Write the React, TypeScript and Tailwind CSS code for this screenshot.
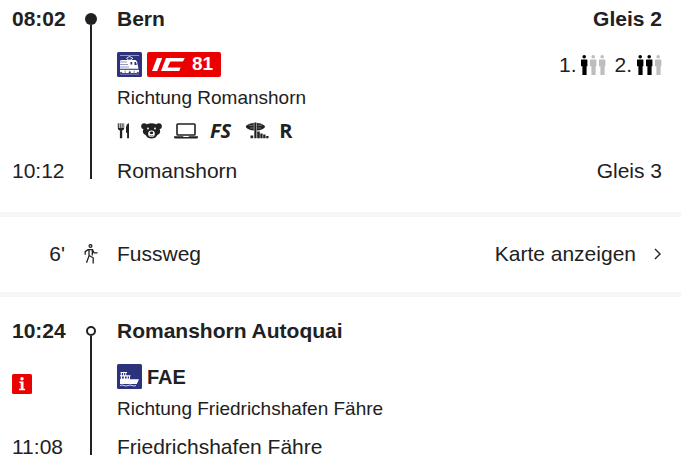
interface StopProps {
  name: string;
  platform?: string;
  bold?: boolean;
}

interface LineProps {
  filled?: boolean;
}

function Stop({ name, platform, bold }: StopProps) {
  return (
    <div className={`flex justify-between leading-6 ${bold ? 'font-bold' : ''}`}>
      <span>{name}</span>
      {platform && <span>{platform}</span>}
    </div>
  );
}

function Line({ filled }: LineProps) {
  return (
    <div className="flex flex-col items-center pt-1.5 pb-1">
      {filled ? (
        <span className="size-3 rounded-full bg-[#212121]" />
      ) : (
        <span className="mt-px size-2.5 rounded-full border-2 border-[#212121]" />
      )}
      <span className="w-0.5 grow bg-[#212121]" />
    </div>
  );
}

function Person({ active }: { active: boolean }) {
  return (
    <svg viewBox="0 0 7 20" className={`h-5 w-[7px] ${active ? 'text-black' : 'text-[#bdbdbd]'}`} fill="currentColor" aria-hidden="true">
      <circle cx="3.2" cy="1.8" r="1.8" />
      <path d="M.4 4.6h5.6q.4 0 .4.4v6.2h-.8V20H1.4v-8.8H0V5q0-.4.4-.4z" />
    </svg>
  );
}

function Occupancy({ label, level }: { label: string; level: number }) {
  return (
    <span className="flex items-center gap-[5px]">
      {label}
      <span className="flex gap-0.5">
        {[1, 2, 3].map((n) => (
          <Person key={n} active={n <= level} />
        ))}
      </span>
    </span>
  );
}

function TrainIcon() {
  return (
    <svg viewBox="0 0 25 25" className="size-[25px]" role="img" aria-label="Zug">
      <rect width="25" height="25" rx="1.5" fill="#2d327d" />
      <path d="M3 3.5h19" stroke="#fff" strokeWidth=".5" />
      <path d="M9.5 6.3l3-1.8 3.3 1.8-2 1.7h-2.5z" stroke="#fff" strokeWidth=".9" fill="none" />
      <path d="M5 8h13.5l1.5 1.5 1.500 7.200H3V8.500z" fill="#fff" />
      <path d="M3 10h7M3 12.500h8M3 15h9" stroke="#2d327d" strokeWidth=".5" />
      <path d="M13.500 10h1.700v2.500h-1.700zM17.500 10h1.500l.8 3h-2.300z" fill="#2d327d" />
      <path d="M3 17.800h19v3.200H3z" fill="#fff" />
      <path d="M4 19.500l1.500 1.500H3zM12.800 18.500l1.200 2.500h-2.500zM21 19.500l1 1.500h-2.500z" fill="#2d327d" />
      <path d="M8.200 18.600v2.400M17.200 18.600v2.400" stroke="#2d327d" strokeWidth=".6" />
      <path d="M3 22.200h19" stroke="#fff" strokeWidth=".4" />
    </svg>
  );
}

function BoatIcon() {
  return (
    <svg viewBox="0 0 25 25" className="size-[25px]" role="img" aria-label="Schiff">
      <rect width="25" height="25" rx="1.5" fill="#2d327d" />
      <path d="M3.500 8h6.500v1h-.8v2.300h4.300v1H13v3h9l-2.200 4.700H3V15h.8v-2.700H3v-1h.8V9h-.3zM4.800 9v2.300h1.300V9zm2.300 0v2.300h1.200V9zM5 12.500v2h1.800v-2zm3 0v2h1.600v-2zm2.700 0v2h1.300v-2z" fill="#fff" fillRule="evenodd" />
      <path d="M3 21.500q2-1 4 0t4 0 4 0 4 0" stroke="#fff" strokeWidth=".8" fill="none" />
    </svg>
  );
}

function IcLogo() {
  return (
    <svg viewBox="0 0 33 14" className="h-3.5 w-[33px]" fill="#fff" role="img" aria-label="IC">
      <path d="M5 0h5.200L5.200 13H0zM14 0h18.700L31 3.600H18.300l-2.700 6h13L27.200 13H9z" />
    </svg>
  );
}

function RestaurantIcon() {
  return (
    <svg viewBox="0 0 12 16" className="h-4 w-3" fill="currentColor" role="img" aria-label="Restaurant">
      <path d="M.8.2h1V5h.9V.2h1V5h.9V.2h1V5h.9V.2h.7v5q0 1.800-2 2.400v7.600H2.900V7.600q-2.100-.6-2.100-2.400zM12 .2v15h-1.900V9.800H9V4.500Q9.300.8 12 .2z" />
    </svg>
  );
}

function BearIcon() {
  return (
    <svg viewBox="0 0 21 16" className="h-4 w-[21px]" role="img" aria-label="Familienwagen">
      <g fill="currentColor">
        <circle cx="3.2" cy="3.2" r="3" />
        <circle cx="17.8" cy="3.2" r="3" />
        <path d="M10.500.3q4.800 0 6.800 3.200l1.800 4q.5 3-2.700 4.500-1.700 3.500-5.900 3.500T4.600 12Q1.400 10.500 1.900 7.500l1.800-4Q5.700.3 10.500.3z" />
      </g>
      <g fill="#fff">
        <circle cx="7" cy="5.5" r=".9" />
        <circle cx="14" cy="5.5" r=".9" />
        <circle cx="10.5" cy="10.7" r="3.3" />
      </g>
      <ellipse cx="10.5" cy="9.8" rx="1.8" ry="1.4" fill="currentColor" />
      <path d="M8.700 12.500q1.800 1.200 3.600 0" stroke="currentColor" strokeWidth=".7" fill="none" />
    </svg>
  );
}

function LaptopIcon() {
  return (
    <svg viewBox="0 0 24 16" className="h-4 w-6" role="img" aria-label="Ruhezone">
      <rect x="3" y="1" width="18" height="11" rx=".8" fill="none" stroke="currentColor" strokeWidth="1.6" />
      <path d="M0 13.200h9l.6.700h4.800l.6-.7h9v.9q0 1.500-1.500 1.500h-21Q0 15.600 0 14.100z" fill="currentColor" />
    </svg>
  );
}

function WirelessIcon() {
  return (
    <svg viewBox="0 0 24 17" className="h-[17px] w-6" role="img" aria-label="Gratis-Internet">
      <g fill="currentColor">
        <path d="M8.800 1Q5 1.200 2.200 3 .8 3.800.8 4.700t1.400 1.700Q5 8.300 8.800 8.500zM12 1q3.800.2 6.600 2 1.400.8 1.400 1.700t-1.400 1.700q-2.800 1.900-6.600 2.100z" />
        <path d="M9.300.5h2.200v15.700H9.300zM5.500 13.500h2.700v2.700H5.500zM12.200 9.500h2.600v6.700h-2.600zM15.300 11.500h2.300v4.700h-2.300zM18.200 12.500h2.300v3.700h-2.300zM21.200 14h2.300v2.200h-2.300z" />
      </g>
      <path d="M4 3.300h4.500M5 6h3.500M12.500 3.300H17M12.500 6H16" stroke="#fff" strokeWidth=".4" />
    </svg>
  );
}

function WalkIcon() {
  return (
    <svg viewBox="0 0 14 20" className="h-5 w-3.5" fill="none" stroke="currentColor" strokeWidth="1.3" aria-hidden="true">
      <circle cx="6.5" cy="2" r="1.4" />
      <path d="M1.200 10.800V7.700L4 5.700h4.500L10 8.800h3.500M5 6v6L2.500 18.800M8.300 6v5.500M5 11.500l4.200 2.300V19.500" />
    </svg>
  );
}

export default function App() {
  return (
    <main className="bg-white font-['Liberation_Sans',Arial,sans-serif] text-[21px] text-[#212121]">
      <section className="grid grid-cols-[53px_52px_1fr] pt-[7px] pr-[19px] pb-[29px] pl-3">
        <div className="flex flex-col justify-between leading-6">
          <time className="font-bold">08:02</time>
          <time>10:12</time>
        </div>
        <Line filled />
        <div>
          <Stop name="Bern" platform="Gleis 2" bold />
          <div className="mt-[21px] flex items-center justify-between">
            <div className="flex gap-[5px]">
              <TrainIcon />
              <span className="flex h-[25px] items-center gap-[7px] rounded-xs bg-[#eb0000] pr-2 pl-[5px] text-[19px] font-bold text-white">
                <IcLogo />
                81
              </span>
            </div>
            <div className="flex h-[25px] items-center gap-2 leading-5">
              <Occupancy label="1." level={1} />
              <Occupancy label="2." level={2} />
            </div>
          </div>
          <p className="mt-[9px] text-[19px] leading-6">Richtung Romanshorn</p>
          <div className="mt-3 mb-5 flex h-[17px] items-center font-['Open_Sans','Noto_Sans',sans-serif] text-[20px] leading-4 font-bold">
            <span className="flex items-center gap-3">
              <RestaurantIcon />
              <BearIcon />
              <LaptopIcon />
              <span className="italic">FS</span>
            </span>
            <span className="ml-3.5 flex items-center gap-2.5">
              <WirelessIcon />
              <span>R</span>
            </span>
          </div>
          <Stop name="Romanshorn" platform="Gleis 3" />
        </div>
      </section>

      <section className="grid grid-cols-[53px_52px_1fr] items-center border-y-[5px] border-[#f6f6f6] pt-6 pr-[19px] pb-[26px] pl-3 leading-[25px]">
        <span className="text-right">6'</span>
        <span className="flex justify-center">
          <WalkIcon />
        </span>
        <div className="flex justify-between">
          <span>Fussweg</span>
          <button type="button" className="flex items-center gap-4">
            Karte anzeigen
            <svg viewBox="0 0 10 12" className="h-3 w-2.5" fill="none" stroke="currentColor" strokeWidth="1.4" aria-hidden="true">
              <path d="M3 1l5 5-5 5" />
            </svg>
          </button>
        </div>
      </section>

      <section className="grid grid-cols-[53px_52px_1fr] pt-[22px] pr-[19px] pl-3">
        <div className="flex flex-col justify-between leading-6">
          <time className="font-bold">10:24</time>
          <svg viewBox="0 0 20 20" className="mb-2.5 size-5" role="img" aria-label="Information">
            <rect width="20" height="20" rx="1.5" fill="#eb0000" />
            <path d="M7.300 7.500h4.200v7.200h1.600v1.600H7v-1.600h1.700V9.100H7.300z" fill="#fff" />
            <circle cx="10" cy="4.8" r="1.7" fill="#fff" />
          </svg>
          <time>11:08</time>
        </div>
        <Line />
        <div>
          <Stop name="Romanshorn Autoquai" bold />
          <div className="mt-[21px] flex h-[25px] items-center gap-[5px] text-[20px] font-bold">
            <BoatIcon />
            FAE
          </div>
          <p className="mt-2 mb-3.5 text-[19px] leading-6">Richtung Friedrichshafen Fähre</p>
          <Stop name="Friedrichshafen Fähre" />
        </div>
      </section>
    </main>
  );
}
